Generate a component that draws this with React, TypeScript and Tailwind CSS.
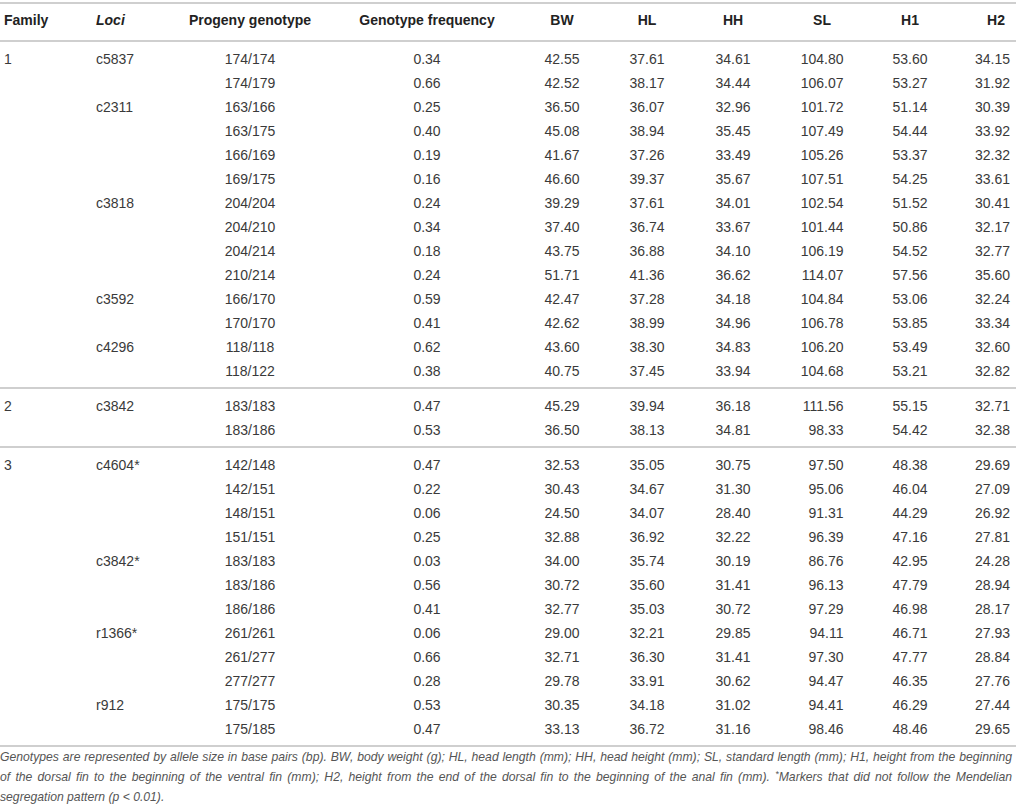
import React from "react";

type Row = [string, string, string, string, string, string, string, string, string, string];

const groups: Row[][] = [
  [
    ["1", "c5837", "174/174", "0.34", "42.55", "37.61", "34.61", "104.80", "53.60", "34.15"],
    ["", "", "174/179", "0.66", "42.52", "38.17", "34.44", "106.07", "53.27", "31.92"],
    ["", "c2311", "163/166", "0.25", "36.50", "36.07", "32.96", "101.72", "51.14", "30.39"],
    ["", "", "163/175", "0.40", "45.08", "38.94", "35.45", "107.49", "54.44", "33.92"],
    ["", "", "166/169", "0.19", "41.67", "37.26", "33.49", "105.26", "53.37", "32.32"],
    ["", "", "169/175", "0.16", "46.60", "39.37", "35.67", "107.51", "54.25", "33.61"],
    ["", "c3818", "204/204", "0.24", "39.29", "37.61", "34.01", "102.54", "51.52", "30.41"],
    ["", "", "204/210", "0.34", "37.40", "36.74", "33.67", "101.44", "50.86", "32.17"],
    ["", "", "204/214", "0.18", "43.75", "36.88", "34.10", "106.19", "54.52", "32.77"],
    ["", "", "210/214", "0.24", "51.71", "41.36", "36.62", "114.07", "57.56", "35.60"],
    ["", "c3592", "166/170", "0.59", "42.47", "37.28", "34.18", "104.84", "53.06", "32.24"],
    ["", "", "170/170", "0.41", "42.62", "38.99", "34.96", "106.78", "53.85", "33.34"],
    ["", "c4296", "118/118", "0.62", "43.60", "38.30", "34.83", "106.20", "53.49", "32.60"],
    ["", "", "118/122", "0.38", "40.75", "37.45", "33.94", "104.68", "53.21", "32.82"],
  ],
  [
    ["2", "c3842", "183/183", "0.47", "45.29", "39.94", "36.18", "111.56", "55.15", "32.71"],
    ["", "", "183/186", "0.53", "36.50", "38.13", "34.81", "98.33", "54.42", "32.38"],
  ],
  [
    ["3", "c4604*", "142/148", "0.47", "32.53", "35.05", "30.75", "97.50", "48.38", "29.69"],
    ["", "", "142/151", "0.22", "30.43", "34.67", "31.30", "95.06", "46.04", "27.09"],
    ["", "", "148/151", "0.06", "24.50", "34.07", "28.40", "91.31", "44.29", "26.92"],
    ["", "", "151/151", "0.25", "32.88", "36.92", "32.22", "96.39", "47.16", "27.81"],
    ["", "c3842*", "183/183", "0.03", "34.00", "35.74", "30.19", "86.76", "42.95", "24.28"],
    ["", "", "183/186", "0.56", "30.72", "35.60", "31.41", "96.13", "47.79", "28.94"],
    ["", "", "186/186", "0.41", "32.77", "35.03", "30.72", "97.29", "46.98", "28.17"],
    ["", "r1366*", "261/261", "0.06", "29.00", "32.21", "29.85", "94.11", "46.71", "27.93"],
    ["", "", "261/277", "0.66", "32.71", "36.30", "31.41", "97.30", "47.77", "28.84"],
    ["", "", "277/277", "0.28", "29.78", "33.91", "30.62", "94.47", "46.35", "27.76"],
    ["", "r912", "175/175", "0.53", "30.35", "34.18", "31.02", "94.41", "46.29", "27.44"],
    ["", "", "175/185", "0.47", "33.13", "36.72", "31.16", "98.46", "48.46", "29.65"],
  ],
];

const grid =
  "grid grid-cols-[92px_88px_140px_214px_56px_114px_58px_120px_56px_78px]";

function DataRow({ r }: { r: Row }) {
  return (
    <div className={`${grid} h-[24px] items-center leading-[24px]`}>
      <div className="pl-[4px]">{r[0]}</div>
      <div className="pl-[4px]">{r[1]}</div>
      <div className="text-center">{r[2]}</div>
      <div className="text-center">{r[3]}</div>
      <div className="text-center">{r[4]}</div>
      <div className="text-center">{r[5]}</div>
      <div className="text-center">{r[6]}</div>
      <div className="text-center">
        <span className="inline-block w-[43px] text-right">{r[7]}</span>
      </div>
      <div className="text-center">{r[8]}</div>
      <div className="text-right pr-[6px]">{r[9]}</div>
    </div>
  );
}

export default function App() {
  return (
    <div
      className="w-[1016px] h-[804px] overflow-hidden bg-white text-[14px] text-[#3a3a3a]"
      style={{ fontFamily: '"Liberation Sans", Arial, Helvetica, sans-serif' }}
    >
      <div className="pt-[2px]">
        <div className="border-t-2 border-[#cfcfcf]" />
        <div className={`${grid} h-[36px] items-center pb-[4px] font-bold text-[#222]`}>
          <div className="pl-[4px]">Family</div>
          <div className="pl-[4px] italic">Loci</div>
          <div className="text-center">Progeny genotype</div>
          <div className="text-center">Genotype frequency</div>
          <div className="text-center">BW</div>
          <div className="text-center">HL</div>
          <div className="text-center">HH</div>
          <div className="text-center">SL</div>
          <div className="text-center">H1</div>
          <div className="text-right pr-[11px]">H2</div>
        </div>
        <div className="border-t-2 border-[#cfcfcf]" />
        {groups.map((g, gi) => (
          <div key={gi}>
            <div className="pt-[5px] pb-[4px]">
              {g.map((r, ri) => (
                <DataRow key={ri} r={r} />
              ))}
            </div>
            <div className="border-t-2 border-[#cfcfcf]" />
          </div>
        ))}
        <div className="pr-[4px] text-[12.2px] leading-[20px] italic text-[#555]">
          <div className="text-justify [text-align-last:justify] whitespace-nowrap">
            Genotypes are represented by allele size in base pairs (bp). BW, body weight (g); HL, head length (mm); HH, head height (mm); SL, standard length (mm); H1, height from the beginning
          </div>
          <div className="text-justify [text-align-last:justify] whitespace-nowrap">
            of the dorsal fin to the beginning of the ventral fin (mm); H2, height from the end of the dorsal fin to the beginning of the anal fin (mm).{" "}
            <sup className="text-[9px]">*</sup>Markers that did not follow the Mendelian
          </div>
          <div>segregation pattern (p &lt; 0.01).</div>
        </div>
      </div>
    </div>
  );
}
